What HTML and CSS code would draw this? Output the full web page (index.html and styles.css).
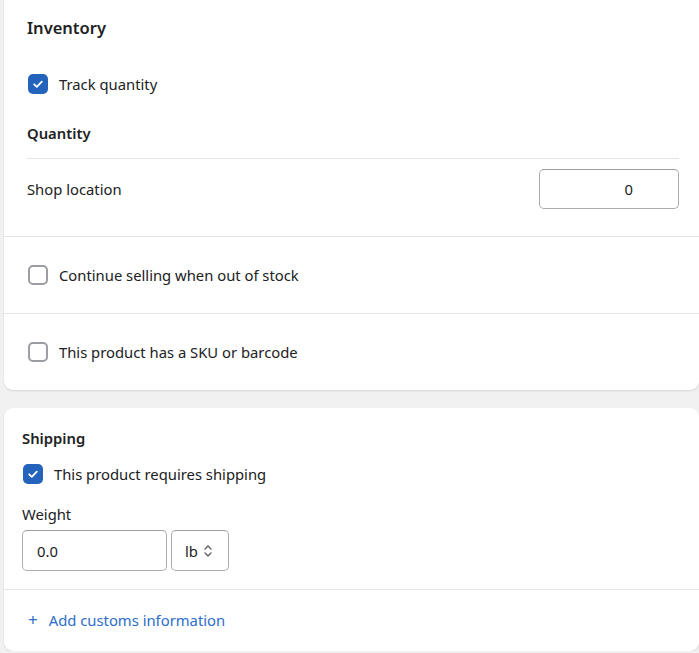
FILE: index.html
```html
<!DOCTYPE html>
<html lang="en">
<head>
<meta charset="utf-8">
<title>Inventory and Shipping</title>
<link rel="stylesheet" href="styles.css">
</head>
<body>
<div class="page">
  <section class="card card-inventory">
    <div class="section section-top">
      <h2 class="card-title">Inventory</h2>
      <label class="check-row track-row">
        <span class="checkbox checked">
          <svg viewBox="0 0 20 20" width="20" height="20"><path d="M6.2 10.3 L8.8 12.8 L13.8 7.6" fill="none" stroke="#fff" stroke-width="1.8" stroke-linecap="round" stroke-linejoin="round"/></svg>
        </span>
        <span class="check-label">Track quantity</span>
      </label>
      <div class="qty-head">Quantity</div>
      <div class="loc-row">
        <span class="loc-label">Shop location</span>
        <div class="text-input qty-input">0</div>
      </div>
    </div>
    <div class="section section-check">
      <label class="check-row">
        <span class="checkbox"></span>
        <span class="check-label">Continue selling when out of stock</span>
      </label>
    </div>
    <div class="section section-check section-last">
      <label class="check-row">
        <span class="checkbox"></span>
        <span class="check-label">This product has a SKU or barcode</span>
      </label>
    </div>
  </section>

  <section class="card card-shipping">
    <div class="ship-main">
      <h3 class="ship-title">Shipping</h3>
      <label class="check-row ship-check">
        <span class="checkbox checked">
          <svg viewBox="0 0 20 20" width="20" height="20"><path d="M6.2 10.3 L8.8 12.8 L13.8 7.6" fill="none" stroke="#fff" stroke-width="1.8" stroke-linecap="round" stroke-linejoin="round"/></svg>
        </span>
        <span class="check-label">This product requires shipping</span>
      </label>
      <div class="weight-label">Weight</div>
      <div class="weight-row">
        <div class="text-input weight-input">0.0</div>
        <div class="text-input unit-select">
          <span>lb</span>
          <svg viewBox="0 0 10 14" width="10" height="14"><path d="M2 5 L5 2 L8 5 M2 9 L5 12 L8 9" fill="none" stroke="#5c5f62" stroke-width="1.4" stroke-linecap="round" stroke-linejoin="round"/></svg>
        </div>
      </div>
    </div>
    <div class="customs">
      <span class="plus">+</span>
      <span class="customs-link">Add customs information</span>
    </div>
  </section>
</div>
</body>
</html>
```

FILE: styles.css
```css
* { box-sizing: border-box; }
html, body {
  margin: 0;
  padding: 0;
  background: #f1f1f1;
  overflow: hidden;
}
body {
  font-family: "Noto Sans", "Open Sans", "Liberation Sans", sans-serif;
  font-size: 14.8px;
  color: #202223;
}
.page {
  display: flex;
  flex-direction: column;
  gap: 18px;
  padding-left: 4px;
}
.card {
  background: #fff;
  width: 695px;
  border-radius: 0 0 9px 9px;
  box-shadow: 0 1px 2px rgba(0,0,0,0.12);
}
.card-inventory {
  margin-top: -11px;
}
.card-shipping {
  border-radius: 9px;
}
.section {
  border-bottom: 1px solid #e4e5e7;
  padding: 0 20px 0 23px;
}
.section-last { border-bottom: none; }
.section-top {
  padding-top: 27px;
  padding-bottom: 27px;
}
.card-title {
  margin: 0;
  font-size: 16.5px;
  font-weight: 600;
  line-height: 24px;
}
.check-row {
  display: flex;
  align-items: center;
  gap: 11px;
  height: 20px;
  padding-left: 1px;
}
.track-row { margin-top: 34px; }
.checkbox {
  width: 20px;
  height: 20px;
  border: 2px solid #9a9da1;
  border-radius: 5px;
  flex: none;
  display: flex;
  align-items: center;
  justify-content: center;
}
.checkbox.checked {
  border: none;
  background: #2463bc;
}
.check-label { line-height: 20px; }
.qty-head {
  margin-top: 29px;
  font-weight: 600;
  line-height: 20px;
  padding-bottom: 15px;
  border-bottom: 1px solid #e1e3e5;
}
.loc-row {
  margin-top: 10px;
  display: flex;
  align-items: center;
  justify-content: space-between;
}
.text-input {
  height: 41px;
  border: 1px solid #a9acaf;
  border-top-color: #9a9da1;
  border-radius: 5px;
  display: flex;
  align-items: center;
  background: #fff;
}
.qty-input {
  width: 140px;
  justify-content: flex-end;
  padding-right: 45px;
  height: 40px;
}
.section-check {
  padding-top: 28px;
  padding-bottom: 28px;
}
.ship-main {
  padding: 20px 20px 18px 18px;
  border-bottom: 1px solid #e4e5e7;
}
.ship-title {
  margin: 0;
  font-size: 14.8px;
  font-weight: 600;
  line-height: 20px;
}
.ship-check { margin-top: 16px; }
.weight-label {
  margin-top: 20px;
  line-height: 20px;
}
.weight-row {
  margin-top: 6px;
  display: flex;
  gap: 4px;
}
.weight-input {
  width: 145px;
  padding-left: 14px;
}
.unit-select {
  width: 58px;
  padding-left: 13px;
  gap: 5px;
}
.unit-select svg { flex: none; }
.customs {
  padding: 20px 20px 21px 24px;
  display: flex;
  align-items: center;
  gap: 11px;
  line-height: 20px;
  color: #2c6ecb;
}
.plus {
  font-size: 17px;
  line-height: 20px;
}
```
